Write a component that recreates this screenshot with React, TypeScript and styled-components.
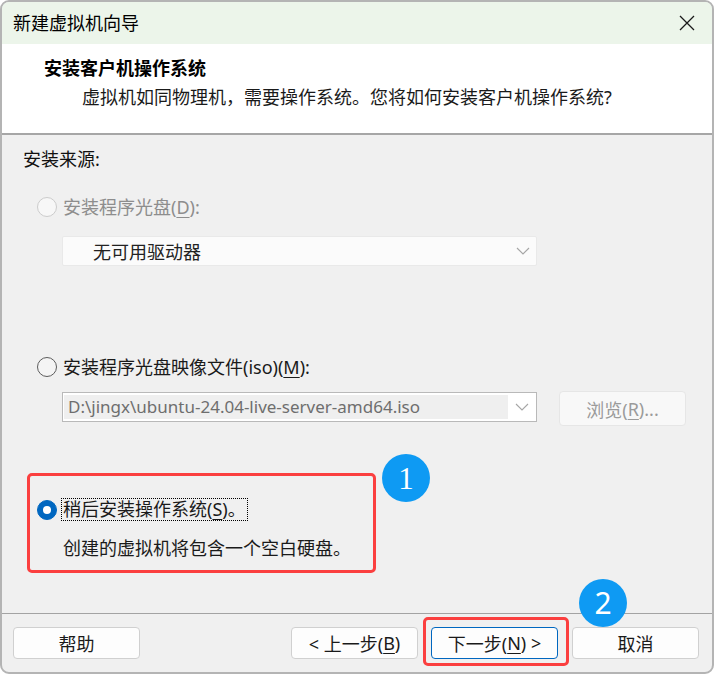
import React from "react";
import styled, { createGlobalStyle } from "styled-components";

const Global = createGlobalStyle`
  html, body { margin: 0; padding: 0; background: #ffffff; }
  body { font-family: "Noto Sans", "Noto Sans CJK SC", sans-serif; color: #000; }
  * { box-sizing: border-box; }
`;

const Window = styled.div`
  width: 714px;
  height: 674px;
  border: 2px solid #b4b4b4;
  border-radius: 9px;
  overflow: hidden;
  display: flex;
  flex-direction: column;
  background: #f0f0f0;
`;

const TitleBar = styled.div`
  height: 42px;
  flex: none;
  display: flex;
  align-items: center;
  justify-content: space-between;
  padding: 0 16px 0 11px;
  background: #ecf5ea;
`;

const TitleText = styled.div`
  font-size: 18px;
  line-height: 24px;
  color: #000;
`;

const CloseButton = styled.div`
  width: 18px;
  height: 18px;
  display: flex;
  align-items: center;
  justify-content: center;
`;

const Header = styled.div`
  height: 91px;
  flex: none;
  background: #ffffff;
  border-bottom: 2px solid #a6a6a6;
  padding: 12px 0 0 42px;
`;

const Heading = styled.div`
  font-size: 18px;
  line-height: 24px;
  font-weight: 700;
  color: #000;
`;

const SubHeading = styled.div`
  margin-top: 5px;
  margin-left: 38px;
  font-size: 18px;
  line-height: 24px;
  color: #1a1a1a;
`;

const Content = styled.div`
  flex: 1;
  padding: 12px 0 0 21px;
  display: flex;
  flex-direction: column;
  align-items: flex-start;
`;

const SourceLabel = styled.div`
  font-size: 18px;
  line-height: 24px;
  color: #111;
`;

const OptionRow = styled.div<{ $mt: number }>`
  margin-top: ${(p) => p.$mt}px;
  margin-left: 14px;
  display: flex;
  align-items: center;
  height: 24px;
`;

const Radio = styled.span<{ $state: "disabled" | "off" | "on" }>`
  width: 20px;
  height: 20px;
  border-radius: 50%;
  flex: none;
  margin-right: 6px;
  position: relative;
  border: 1px solid
    ${(p) => (p.$state === "disabled" ? "#cccccc" : p.$state === "off" ? "#5c5c5c" : "#0067c0")};
  background: ${(p) => (p.$state === "disabled" ? "#f7f7f7" : p.$state === "off" ? "#f4f4f4" : "#0067c0")};
  &::after {
    content: "";
    display: ${(p) => (p.$state === "on" ? "block" : "none")};
    position: absolute;
    left: 5px;
    top: 5px;
    width: 8px;
    height: 8px;
    border-radius: 50%;
    background: #ffffff;
  }
`;

const OptionLabel = styled.span<{ $disabled?: boolean }>`
  font-size: 18px;
  line-height: 24px;
  color: ${(p) => (p.$disabled ? "#8d8d8d" : "#1a1a1a")};
  white-space: nowrap;
`;

const FocusLabel = styled.span`
  font-size: 18px;
  line-height: 21px;
  color: #1a1a1a;
  border: 1px dotted #000;
  padding: 0 1px;
  margin-left: -2px;
  white-space: nowrap;
`;

const Mn = styled.u`
  text-underline-offset: 3px;
  text-decoration-thickness: 1px;
`;

const DisabledSelect = styled.div`
  margin-top: 17px;
  margin-left: 39px;
  width: 475px;
  height: 30px;
  background: #fbfbfb;
  border: 1px solid #e9e9e9;
  border-radius: 2px;
  display: flex;
  align-items: center;
  justify-content: space-between;
  padding: 0 6px 0 30px;
  font-size: 18px;
  color: #222;
`;

const FileRow = styled.div`
  margin-top: 12px;
  margin-left: 39px;
  display: flex;
  align-items: flex-start;
  gap: 22px;
`;

const Combo = styled.div`
  margin-top: 1px;
  width: 475px;
  height: 30px;
  background: #ffffff;
  border: 1px solid #b9b9b9;
  display: flex;
  align-items: stretch;
  padding: 2px 0 2px 1px;
`;

const ComboEdit = styled.div`
  width: 444px;
  background: #efefef;
  padding-left: 4px;
  font-family: "Noto Sans", sans-serif;
  font-size: 17px;
  line-height: 24px;
  color: #6e6e6e;
  white-space: nowrap;
  overflow: hidden;
`;

const ComboArrow = styled.div`
  flex: 1;
  display: flex;
  align-items: center;
  justify-content: center;
`;

const BrowseButton = styled.div`
  width: 127px;
  height: 35px;
  background: #f8f8f8;
  border: 1px solid #e6e6e6;
  border-radius: 4px;
  display: flex;
  align-items: center;
  justify-content: center;
  font-size: 18px;
  color: #9b9b9b;
`;

const LaterGroup = styled.div`
  position: relative;
  margin-top: 72px;
  margin-left: 14px;
`;

const LaterRow = styled.div`
  display: flex;
  align-items: center;
  height: 23px;
`;

const LaterDesc = styled.div`
  margin-top: 15px;
  margin-left: 26px;
  font-size: 18px;
  line-height: 24px;
  color: #1a1a1a;
`;

const RedBox = styled.div`
  position: absolute;
  border: 3px solid #fb3f3f;
  border-radius: 5px;
  pointer-events: none;
`;

const Badge = styled.div<{ $serif?: boolean }>`
  position: absolute;
  width: 48px;
  height: 48px;
  border-radius: 50%;
  background: #0e9af3;
  color: #ffffff;
  display: flex;
  align-items: center;
  justify-content: center;
  font-family: ${(p) => (p.$serif ? '"Liberation Serif", serif' : '"Noto Sans", sans-serif')};
  font-size: ${(p) => (p.$serif ? 31 : 30)}px;
  line-height: 1;
`;

const Footer = styled.div`
  height: 59px;
  flex: none;
  border-top: 1px solid #a3a3a3;
  padding: 13px 13px 0 11px;
  display: flex;
  align-items: flex-start;
`;

const Spacer = styled.div`
  flex: 1;
`;

const Button = styled.div<{ $primary?: boolean }>`
  width: 127px;
  height: 32px;
  background: #fdfdfd;
  border: 1px solid ${(p) => (p.$primary ? "#0067c0" : "#d0d0d0")};
  border-radius: 4px;
  display: flex;
  align-items: center;
  justify-content: center;
  font-size: 18px;
  color: #1a1a1a;
  white-space: nowrap;
`;

const ButtonWrap = styled.div<{ $ml: number }>`
  position: relative;
  margin-left: ${(p) => p.$ml}px;
`;

const Chevron = () => (
  <svg width="14" height="8" viewBox="0 0 14 8">
    <path d="M1 1 L7 7 L13 1" fill="none" stroke="#a6a6a6" strokeWidth="1.1" />
  </svg>
);

export default function App() {
  return (
    <>
      <Global />
      <Window>
        <TitleBar>
          <TitleText>新建虚拟机向导</TitleText>
          <CloseButton>
            <svg width="16" height="16" viewBox="0 0 16 16">
              <path d="M1 1 L15 15 M15 1 L1 15" stroke="#1a1a1a" strokeWidth="1.3" fill="none" />
            </svg>
          </CloseButton>
        </TitleBar>
        <Header>
          <Heading>安装客户机操作系统</Heading>
          <SubHeading>虚拟机如同物理机，需要操作系统。您将如何安装客户机操作系统?</SubHeading>
        </Header>
        <Content>
          <SourceLabel>安装来源:</SourceLabel>
          <OptionRow $mt={24}>
            <Radio $state="disabled" />
            <OptionLabel $disabled>
              安装程序光盘(<Mn>D</Mn>):
            </OptionLabel>
          </OptionRow>
          <DisabledSelect>
            <span>无可用驱动器</span>
            <Chevron />
          </DisabledSelect>
          <OptionRow $mt={89}>
            <Radio $state="off" />
            <OptionLabel>
              安装程序光盘映像文件(iso)(<Mn>M</Mn>):
            </OptionLabel>
          </OptionRow>
          <FileRow>
            <Combo>
              <ComboEdit>D:\jingx\ubuntu-24.04-live-server-amd64.iso</ComboEdit>
              <ComboArrow>
                <Chevron />
              </ComboArrow>
            </Combo>
            <BrowseButton>
              浏览(<Mn>R</Mn>)...
            </BrowseButton>
          </FileRow>
          <LaterGroup>
            <LaterRow>
              <Radio $state="on" />
              <FocusLabel>
                稍后安装操作系统(<Mn>S</Mn>)。
              </FocusLabel>
            </LaterRow>
            <LaterDesc>创建的虚拟机将包含一个空白硬盘。</LaterDesc>
            <RedBox style={{ left: -10, top: -25, width: 349, height: 100 }} />
            <Badge $serif style={{ left: 345, top: -44 }}>1</Badge>
          </LaterGroup>
        </Content>
        <Footer>
          <Button>帮助</Button>
          <Spacer />
          <ButtonWrap $ml={0}>
            <Button>
              &lt; 上一步(<Mn>B</Mn>)
            </Button>
          </ButtonWrap>
          <ButtonWrap $ml={13}>
            <Button $primary>
              下一步(<Mn>N</Mn>) &gt;
            </Button>
            <RedBox style={{ left: -8, top: -10, right: -11, bottom: -7 }} />
            <Badge style={{ left: 148, top: -48 }}>2</Badge>
          </ButtonWrap>
          <ButtonWrap $ml={14}>
            <Button>取消</Button>
          </ButtonWrap>
        </Footer>
      </Window>
    </>
  );
}
